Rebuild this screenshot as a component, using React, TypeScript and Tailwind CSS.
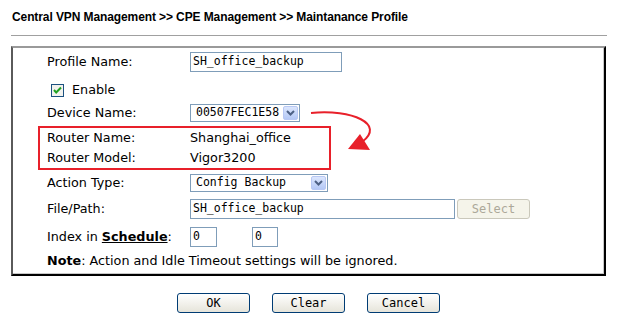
const sans = "font-['DejaVu_Sans',Verdana,sans-serif]"
const mono = "font-['DejaVu_Sans_Mono','Liberation_Mono',monospace]"

function DropButton() {
  return (
    <span className="flex h-[14px] w-[15px] items-center justify-center rounded-[2px] border border-[#b8c8f4] bg-gradient-to-b from-[#dce6fd] to-[#b4c8f6]">
      <svg width="9" height="6" viewBox="0 0 9 6">
        <path d="M1 1 L4.5 4.5 L8 1" fill="none" stroke="#4d6185" strokeWidth="2" />
      </svg>
    </span>
  )
}

function Select({ value, width }: { value: string; width: string }) {
  return (
    <div className={`flex h-[18px] ${width} items-center justify-between border border-[#7f9db9] bg-white pl-[5px] pr-[1px]`}>
      <span className={`${mono} text-[11.5px] text-black`}>{value}</span>
      <DropButton />
    </div>
  )
}

function TextBox({ value, width }: { value: string; width: string }) {
  return (
    <div className={`flex h-[20px] ${width} items-center border border-[#7f9db9] bg-white pl-[2px]`}>
      <span className={`${mono} text-[11.5px] text-black`}>{value}</span>
    </div>
  )
}

function Row({ label, children, className = '' }: { label: React.ReactNode; children?: React.ReactNode; className?: string }) {
  return (
    <div className={`flex items-center ${className}`}>
      <div className="w-[143px] shrink-0">{label}</div>
      {children}
    </div>
  )
}

function PushButton({ label }: { label: string }) {
  return (
    <button
      type="button"
      className={`h-[20px] w-[73px] rounded-[3px] border border-[#003c74] bg-gradient-to-b from-white to-[#e6e4da] ${mono} text-[12px] text-black`}
    >
      {label}
    </button>
  )
}

export default function App() {
  return (
    <div className={`relative h-[322px] w-[617px] bg-white ${sans} text-[12.75px] text-black`}>
      <div className="flex h-[33px] items-center pl-[12px] font-['Liberation_Sans',Arial,sans-serif] text-[12px] font-bold tracking-[-0.1px]">
        Central VPN Management &gt;&gt; CPE Management &gt;&gt; Maintanance Profile
      </div>
      <div className="ml-[11px] mt-[2px] h-px w-[596px] bg-[#a0a0a0]" />

      <div className="ml-[11px] mt-[10px] w-[595px] border-2 border-t-[#9a9a9a] border-l-[#5a5a5a] border-r-black border-b-black pb-[3px] pl-[34px] pt-[4px] shadow-[inset_-1px_-1px_0_#c8c8c8]">
        <Row label="Profile Name:" className="h-[20px]">
          <TextBox value="SH_office_backup" width="w-[152px]" />
        </Row>

        <div className="mt-[8px] flex h-[20px] items-center gap-[8px] pl-[4px]">
          <svg width="13" height="13" viewBox="0 0 13 13">
            <rect x="0.5" y="0.5" width="12" height="12" fill="#f2f2ee" stroke="#1c5180" />
            <path d="M3 6 L5.2 8.5 L10 3.5" fill="none" stroke="#21a121" strokeWidth="2" />
          </svg>
          <span>Enable</span>
        </div>

        <Row label="Device Name:" className="mt-[4px] h-[18px]">
          <Select value="00507FEC1E58" width="w-[110px]" />
        </Row>

        <div className="-ml-[9px] mt-[4px] w-[293px] border-2 border-[#e8202a] pl-[7px]">
          <Row label="Router Name:" className="h-[20px]">
            <span>Shanghai_office</span>
          </Row>
          <Row label="Router Model:" className="h-[20px]">
            <span>Vigor3200</span>
          </Row>
        </div>

        <Row label="Action Type:" className="mt-[4px] h-[18px]">
          <Select value="Config Backup" width="w-[138px]" />
        </Row>

        <Row label="File/Path:" className="mt-[7px] h-[20px]">
          <TextBox value="SH_office_backup" width="w-[265px]" />
          <button
            type="button"
            disabled
            className={`ml-[2px] h-[20px] w-[73px] rounded-[3px] border border-[#cac8bb] bg-[#f5f4ea] ${mono} text-[12px] text-[#aca899]`}
          >
            Select
          </button>
        </Row>

        <Row
          label={
            <span>
              Index in <b className="underline">Schedule</b>:
            </span>
          }
          className="mt-[8px] h-[20px]"
        >
          <TextBox value="0" width="w-[27px]" />
          <div className="ml-[35px]">
            <TextBox value="0" width="w-[26px]" />
          </div>
        </Row>

        <div className="mt-[4px] flex h-[20px] items-center">
          <span>
            <b>Note</b>: Action and Idle Timeout settings will be ignored.
          </span>
        </div>
      </div>

      <div className="mt-[17px] flex justify-center gap-[22px]">
        <PushButton label="OK" />
        <PushButton label="Clear" />
        <PushButton label="Cancel" />
      </div>

      <svg className="pointer-events-none absolute left-0 top-0" width="617" height="322">
        <path d="M311 113 C352 109 386 124 362 142" fill="none" stroke="#e8202a" strokeWidth="2" />
        <polygon points="348,149 360,134 370,150" fill="#e8202a" />
      </svg>
    </div>
  )
}
